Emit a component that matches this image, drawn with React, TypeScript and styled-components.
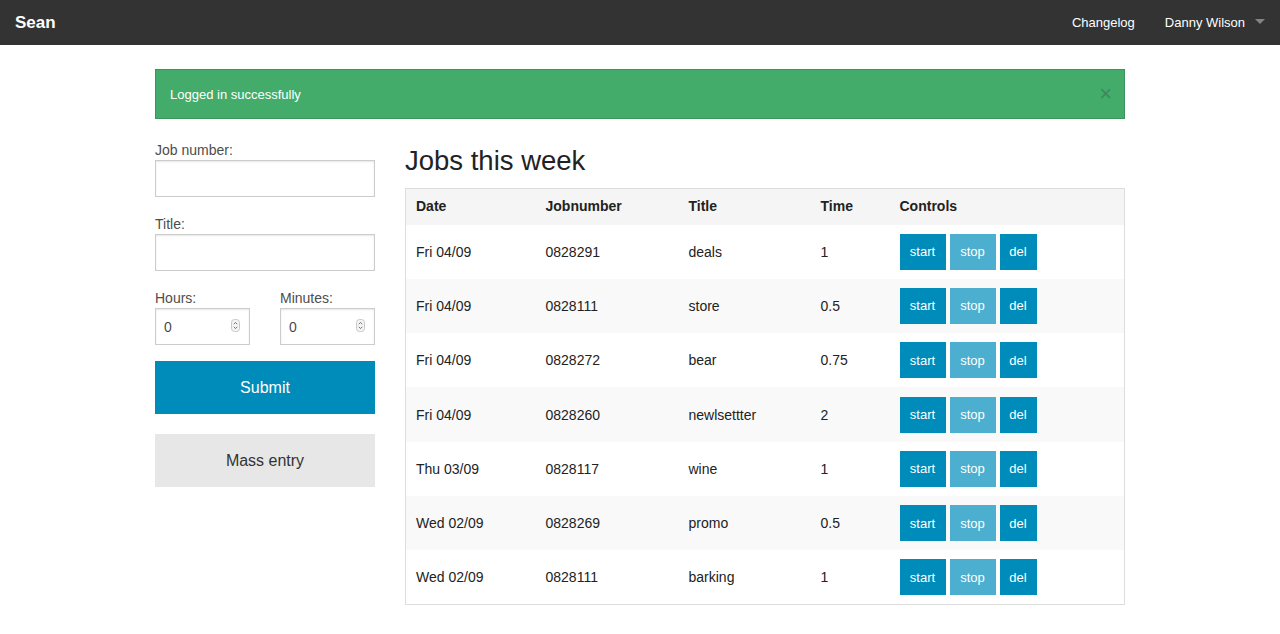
import React from "react";
import styled, { createGlobalStyle } from "styled-components";

const Global = createGlobalStyle`
  html, body { margin: 0; padding: 0; background: #fff; }
  body { font-family: "Liberation Sans", Arial, Helvetica, sans-serif; color: #222; }
  * { box-sizing: border-box; }
`;

const TopBar = styled.nav`
  height: 45px;
  background: #333;
  display: flex;
  align-items: center;
  justify-content: space-between;
`;

const Brand = styled.a`
  color: #fff;
  font-size: 17px;
  font-weight: bold;
  padding-left: 15px;
  line-height: 45px;
  text-decoration: none;
`;

const NavList = styled.ul`
  display: flex;
  list-style: none;
  margin: 0;
  padding: 0;
  height: 45px;
`;

const NavItem = styled.li<{ $dropdown?: boolean }>`
  position: relative;
  display: flex;
  align-items: center;
  padding: 0 ${(p) => (p.$dropdown ? "35px" : "15px")} 0 15px;
  color: #fff;
  font-size: 13px;
  line-height: 45px;
`;

const Caret = styled.span`
  position: absolute;
  right: 15px;
  top: 19px;
  width: 0;
  height: 0;
  border-left: 5px solid transparent;
  border-right: 5px solid transparent;
  border-top: 5px solid rgba(255, 255, 255, 0.4);
`;

const Container = styled.div`
  width: 970px;
  margin: 24px auto 0;
`;

const Alert = styled.div`
  position: relative;
  height: 50px;
  background: #43ac6a;
  border: 1px solid #3a945b;
  color: #fff;
  font-size: 13px;
  display: flex;
  align-items: center;
  padding: 0 24px 0 14px;
  margin-bottom: 20px;
`;

const Close = styled.span`
  position: absolute;
  right: 12px;
  top: 50%;
  transform: translateY(-50%);
  font-size: 22px;
  line-height: 1;
  color: #333;
  opacity: 0.3;
`;

const Columns = styled.div`
  display: grid;
  grid-template-columns: 220px 720px;
  column-gap: 30px;
`;

const Form = styled.form`
  display: flex;
  flex-direction: column;
`;

const Label = styled.label`
  display: block;
  font-size: 14px;
  line-height: 21px;
  padding-top: 1px;
  margin-bottom: -1px;
  color: #4d4d4d;
`;

const Field = styled.div`
  margin-bottom: 16px;
  position: relative;
`;

const Input = styled.input`
  display: block;
  width: 100%;
  height: 37px;
  border: 1px solid #ccc;
  background: #fff;
  box-shadow: inset 0 1px 2px rgba(0, 0, 0, 0.1);
  font-family: inherit;
  font-size: 14px;
  color: rgba(0, 0, 0, 0.75);
  padding: 8px;
  margin: 0;
  outline: none;
`;

const Split = styled.div`
  display: grid;
  grid-template-columns: 95px 95px;
  column-gap: 30px;
`;

const NumberWrap = styled.div`
  position: relative;
`;

const Spinner = styled.svg`
  position: absolute;
  right: 10px;
  top: 11px;
`;

const BigButton = styled.button<{ $secondary?: boolean }>`
  display: block;
  width: 100%;
  height: 53px;
  border: none;
  margin: 0 0 20px;
  font-family: inherit;
  font-size: 16px;
  background: ${(p) => (p.$secondary ? "#e7e7e7" : "#008cba")};
  color: ${(p) => (p.$secondary ? "#333" : "#fff")};
  cursor: pointer;
`;

const Heading = styled.h3`
  margin: 2px 0 8px;
  font-size: 27.5px;
  font-weight: normal;
  line-height: 39px;
  color: #222;
`;

const Table = styled.table`
  width: 720px;
  border: 1px solid #ddd;
  border-collapse: collapse;
  table-layout: fixed;
  font-size: 14px;
`;

const Th = styled.th`
  background: #f5f5f5;
  text-align: left;
  font-weight: bold;
  color: #222;
  height: 36px;
  padding: 0 10px 1px;
`;

const Row = styled.tr<{ $alt?: boolean }>`
  background: ${(p) => (p.$alt ? "#f9f9f9" : "#fff")};
`;

const Td = styled.td`
  padding: 9px 10px;
  height: 54.3px;
  color: #222;
  vertical-align: middle;
`;

const Controls = styled.div`
  display: flex;
  gap: 4px;
`;

const SmallButton = styled.button<{ $light?: boolean; $w: number }>`
  width: ${(p) => p.$w}px;
  height: 36px;
  padding: 0;
  border: none;
  font-family: inherit;
  font-size: 13px;
  color: #fff;
  background: ${(p) => (p.$light ? "#4cafcf" : "#008cba")};
  cursor: pointer;
`;

const jobs = [
  { date: "Fri 04/09", num: "0828291", title: "deals", time: "1" },
  { date: "Fri 04/09", num: "0828111", title: "store", time: "0.5" },
  { date: "Fri 04/09", num: "0828272", title: "bear", time: "0.75" },
  { date: "Fri 04/09", num: "0828260", title: "newlsettter", time: "2" },
  { date: "Thu 03/09", num: "0828117", title: "wine", time: "1" },
  { date: "Wed 02/09", num: "0828269", title: "promo", time: "0.5" },
  { date: "Wed 02/09", num: "0828111", title: "barking", time: "1" },
];

const SpinIcon = () => (
  <Spinner width="9" height="13" viewBox="0 0 9 13">
    <rect x="0.5" y="0.5" width="8" height="12" rx="3" fill="#f4f4f4" stroke="#c8c8c8" />
    <path d="M2.8 5.2 L4.5 3.4 L6.2 5.2" fill="none" stroke="#666" strokeWidth="0.9" />
    <path d="M2.8 7.8 L4.5 9.6 L6.2 7.8" fill="none" stroke="#666" strokeWidth="0.9" />
  </Spinner>
);

export default function App() {
  return (
    <>
      <Global />
      <TopBar>
        <Brand href="#">Sean</Brand>
        <NavList>
          <NavItem>Changelog</NavItem>
          <NavItem $dropdown>
            Danny Wilson
            <Caret />
          </NavItem>
        </NavList>
      </TopBar>
      <Container>
        <Alert>
          Logged in successfully
          <Close>×</Close>
        </Alert>
        <Columns>
          <Form onSubmit={(e) => e.preventDefault()}>
            <Field>
              <Label>Job number:</Label>
              <Input type="text" />
            </Field>
            <Field>
              <Label>Title:</Label>
              <Input type="text" />
            </Field>
            <Split>
              <Field>
                <Label>Hours:</Label>
                <NumberWrap>
                  <Input type="text" defaultValue="0" />
                  <SpinIcon />
                </NumberWrap>
              </Field>
              <Field>
                <Label>Minutes:</Label>
                <NumberWrap>
                  <Input type="text" defaultValue="0" />
                  <SpinIcon />
                </NumberWrap>
              </Field>
            </Split>
            <BigButton type="submit">Submit</BigButton>
            <BigButton type="button" $secondary>
              Mass entry
            </BigButton>
          </Form>
          <div>
            <Heading>Jobs this week</Heading>
            <Table>
              <colgroup>
                <col style={{ width: 130 }} />
                <col style={{ width: 143 }} />
                <col style={{ width: 132 }} />
                <col style={{ width: 79 }} />
                <col />
              </colgroup>
              <thead>
                <tr>
                  <Th>Date</Th>
                  <Th>Jobnumber</Th>
                  <Th>Title</Th>
                  <Th>Time</Th>
                  <Th>Controls</Th>
                </tr>
              </thead>
              <tbody>
                {jobs.map((j, i) => (
                  <Row key={i} $alt={i % 2 === 1}>
                    <Td>{j.date}</Td>
                    <Td>{j.num}</Td>
                    <Td>{j.title}</Td>
                    <Td>{j.time}</Td>
                    <Td>
                      <Controls>
                        <SmallButton $w={46}>start</SmallButton>
                        <SmallButton $w={46} $light>
                          stop
                        </SmallButton>
                        <SmallButton $w={37}>del</SmallButton>
                      </Controls>
                    </Td>
                  </Row>
                ))}
              </tbody>
            </Table>
          </div>
        </Columns>
      </Container>
    </>
  );
}
